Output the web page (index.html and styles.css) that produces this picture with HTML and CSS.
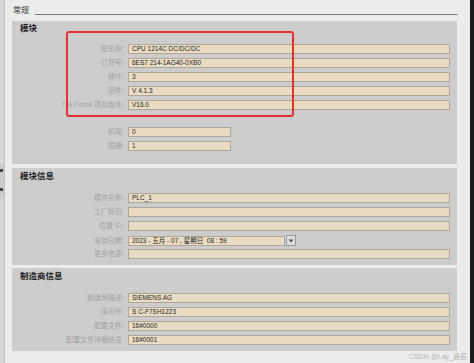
FILE: index.html
```html
<!DOCTYPE html>
<html lang="zh-CN">
<head>
    <meta charset="UTF-8">
    <title>常规 - PLC_1</title>
    <link rel="stylesheet" href="styles.css">
</head>
<body>
    <div class="page">
        <!-- Left collapsed rail -->
        <div class="left-rail">
            <div class="rail-tools">
                <span class="rail-btn"></span>
                <span class="rail-btn"></span>
            </div>
        </div>

        <main class="main">
            <div class="tab-head">
                <span class="tab-title">常规</span>
                <span class="tab-line"></span>
            </div>

            <!-- 模块 -->
            <section class="panel panel-module">
                <h2>模块</h2>
                <div class="fields">
                    <div class="field"><label>短名称:</label><div class="box">CPU 1214C DC/DC/DC</div></div>
                    <div class="field"><label>订货号:</label><div class="box">6ES7 214-1AG40-0XB0</div></div>
                    <div class="field"><label>硬件:</label><div class="box">3</div></div>
                    <div class="field"><label>固件:</label><div class="box">V 4.1.3</div></div>
                    <div class="field"><label>TIA Portal 项目版本:</label><div class="box">V16.0</div></div>
                </div>
                <div class="fields fields-slot">
                    <div class="field"><label>机架:</label><div class="box box-short">0</div></div>
                    <div class="field"><label>插槽:</label><div class="box box-short">1</div></div>
                </div>
                <div class="highlight"></div>
            </section>

            <!-- 模块信息 -->
            <section class="panel panel-info">
                <h2>模块信息</h2>
                <div class="fields">
                    <div class="field"><label>模块名称:</label><div class="box">PLC_1</div></div>
                    <div class="field"><label>工厂标识:</label><div class="box"></div></div>
                    <div class="field"><label>位置 ID:</label><div class="box"></div></div>
                    <div class="field">
                        <label>安装日期:</label>
                        <div class="date">
                            <div class="box box-date">2023 - 五月 - 07 , 星期日 &nbsp;08 : 59</div>
                            <span class="date-btn">
                                <svg width="6" height="4" viewBox="0 0 6 4"><path d="M0.5 0.5 H5.5 L3 3.5 Z" fill="#555"/></svg>
                            </span>
                        </div>
                    </div>
                    <div class="field"><label>更多信息:</label><div class="box"></div></div>
                </div>
            </section>

            <!-- 制造商信息 -->
            <section class="panel panel-maker">
                <h2>制造商信息</h2>
                <div class="fields">
                    <div class="field"><label>制造商描述:</label><div class="box">SIEMENS AG</div></div>
                    <div class="field"><label>序列号:</label><div class="box">S C-F7SH1223</div></div>
                    <div class="field"><label>配置文件:</label><div class="box">16#0000</div></div>
                    <div class="field"><label>配置文件详细信息:</label><div class="box">16#0001</div></div>
                </div>
            </section>

            <div class="watermark">CSDN @Lay_鑫辰</div>
        </main>

        <div class="right-gutter"></div>
        <div class="right-edge"></div>
    </div>
</body>
</html>
```

FILE: styles.css
```css
/* General styling */
body {
    margin: 0;
    padding: 0;
    background-color: #ececec;
    font-family: "Liberation Sans", "Noto Sans CJK SC", sans-serif;
    color: #2a2a2a;
}

.page {
    display: flex;
    width: 474px;
    height: 363px;
    overflow: hidden;
}

/* Left rail */
.left-rail {
    width: 4px;
    background-color: #d9d9d9;
    border-right: 1px solid #c2c2c2;
}

.rail-tools {
    margin-top: 163px;
    height: 36px;
    background-color: #cbcbcb;
    display: flex;
    flex-direction: column;
    gap: 16px;
    padding-top: 6px;
    box-sizing: border-box;
}

.rail-btn {
    display: block;
    width: 3px;
    height: 3px;
    background-color: #444;
}

/* Main column */
.main {
    flex: 1;
    padding-left: 7px;
    position: relative;
    z-index: 1;
}

.right-gutter {
    width: 13px;
}

.right-edge {
    width: 4px;
    background-color: #1c1c1c;
    position: relative;
    z-index: 2;
}

/* Tab header */
.tab-head {
    display: flex;
    align-items: flex-start;
    height: 21px;
    padding-top: 5px;
    box-sizing: border-box;
}

.tab-title {
    margin-left: 1px;
    font-size: 8px;
    line-height: 12px;
    color: #333;
}

.tab-line {
    flex: 1;
    margin: 9px -1px 0 6px;
    border-top: 1px solid #7d7d7d;
}

/* Panels */
.panel {
    position: relative;
    background-color: #cdcdcd;
    padding: 1px 7px 6px 8px;
}

.panel h2 {
    margin: 0;
    font-size: 8.5px;
    font-weight: bold;
    line-height: 12px;
    color: #1a1a1a;
}

.panel-module {
    padding-bottom: 13px;
}

.panel-module h2 {
    margin-bottom: 10px;
}

.panel-info {
    margin-top: 4px;
    padding-top: 2px;
}

.panel-maker {
    margin-top: 3px;
    padding-top: 2px;
}

.panel-info h2,
.panel-maker h2 {
    margin-bottom: 11px;
}

/* Form rows */
.fields {
    display: flex;
    flex-direction: column;
    gap: 4px;
}

.fields-slot {
    margin-top: 17px;
}

.field {
    display: grid;
    grid-template-columns: 104px 1fr;
    column-gap: 4px;
    height: 10px;
    align-items: center;
}

.field label {
    text-align: right;
    white-space: nowrap;
    font-size: 7px;
    line-height: 10px;
    color: #a3a3a3;
}

.box {
    height: 10px;
    box-sizing: border-box;
    border: 1px solid #aea699;
    background-color: #ebdbc2;
    padding-left: 3px;
    font-size: 6.5px;
    line-height: 8px;
    color: #262626;
    white-space: nowrap;
    overflow: hidden;
}

.box-short {
    width: 103px;
}

.date {
    display: flex;
    align-items: center;
    gap: 1px;
}

.box-date {
    width: 157px;
}

.date-btn {
    display: flex;
    align-items: center;
    justify-content: center;
    width: 10px;
    height: 11px;
    box-sizing: border-box;
    border: 1px solid #9a9a9a;
    background-color: #dedede;
}

/* Red highlight drawn over the module rows */
.highlight {
    position: absolute;
    left: 54px;
    top: 10px;
    width: 228px;
    height: 86px;
    box-sizing: border-box;
    border: 2px solid #e3322e;
    border-radius: 3px;
}

.watermark {
    margin: 1px -10px 0 0;
    text-align: right;
    font-size: 7px;
    line-height: 9px;
    color: #b5b5b5;
}
```
